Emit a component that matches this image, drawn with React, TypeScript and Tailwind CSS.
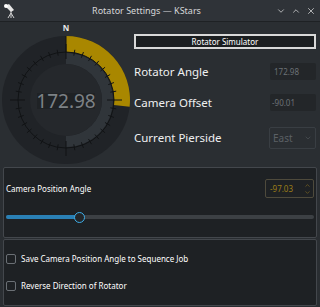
import { ChevronDown, ChevronUp, X } from 'lucide-react';

const CX = 66;
const CY = 78;

const ticks = Array.from({ length: 36 }, (_, i) => i * 10);

const Dial: React.FC = () => {
  return (
    <svg width="132" height="145" viewBox="0 0 132 145" className="shrink-0">
      <text x={CX} y="9" textAnchor="middle" fontSize="8" fontWeight="700" fill="#e8e8e8" fontFamily="Noto Sans, sans-serif">N</text>
      <circle cx={CX} cy={CY} r="64" fill="#202327" />
      <path d="M 66 14 A 64 64 0 0 1 129.65 84.69 L 113.74 83.02 A 48 48 0 0 0 66 30 Z" fill="#a98700" />
      <path d="M 66 31 A 47 47 0 0 1 66 125 L 66 114 A 36 36 0 0 0 66 42 Z" fill="#30353a" />
      <circle cx={CX} cy={CY} r="36" fill="#25282c" />
      <circle cx={CX} cy={CY} r="48" fill="none" stroke="#111315" strokeWidth="1" />
      <line x1={CX} y1="14" x2={CX} y2="30" stroke="#111315" strokeWidth="1" />
      {ticks.map((a) => {
        const rad = (a * Math.PI) / 180;
        const big = a % 90 === 0;
        const r1 = big ? 41 : 45;
        const r2 = big ? 56 : 51;
        return (
          <line
            key={a}
            x1={CX + r1 * Math.sin(rad)}
            y1={CY - r1 * Math.cos(rad)}
            x2={CX + r2 * Math.sin(rad)}
            y2={CY - r2 * Math.cos(rad)}
            stroke="#111315"
            strokeWidth="1"
          />
        );
      })}
      <rect x="37" y="71" width="58" height="16" fill="#1f2225" />
      <text x={CX} y="86" textAnchor="middle" fontSize="19" fill="#7d8185" fontFamily="Noto Sans, sans-serif">172.98</text>
    </svg>
  );
};

const TitleIcon: React.FC = () => (
  <svg width="14" height="16" viewBox="0 0 14 16">
    <path d="M2 3 L6 1 L11 7 L8 9 Z" fill="#e6e6e6" />
    <circle cx="3" cy="3" r="2" fill="#ffffff" />
    <path d="M8 8 L8 10 M8 10 L5 15 M8 10 L11 15 M8 10 L8 15" stroke="#d0d0d0" strokeWidth="1" />
  </svg>
);

const App: React.FC = () => {
  return (
    <div className="w-[320px] h-[307px] bg-[#2a2e32] flex flex-col overflow-hidden font-['Noto_Sans',sans-serif] text-[#eff0f1]">
      <div className="h-[22px] shrink-0 bg-[#2f3338] border-b border-[#1e2124] flex items-center px-[3px] relative">
        <TitleIcon />
        <div className="flex-1 text-center text-[9px] text-[#d6d7d8]">Rotator Settings — KStars</div>
        <div className="flex items-center gap-[5px] pr-[1px] text-[#c8c9ca]">
          <ChevronDown size={10} strokeWidth={2} />
          <ChevronUp size={10} strokeWidth={2} />
          <X size={10} strokeWidth={2} />
        </div>
      </div>

      <div className="flex h-[145px] shrink-0">
        <Dial />
        <div className="flex flex-col pl-[2px] pt-[12px] w-[184px]">
          <div className="w-[182px] h-[15px] border-2 border-[#d8d8d8] bg-[#1b1e20] flex items-center justify-center text-[8px] text-white leading-none">
            Rotator Simulator
          </div>
          <div className="flex items-center justify-between mt-[14px] h-[17px]">
            <span className="text-[11.5px]">Rotator Angle</span>
            <div className="w-[46px] h-[17px] bg-[#232629] rounded-[2px] text-[8px] text-[#6c7176] flex items-center pl-[4px]">172.98</div>
          </div>
          <div className="flex items-center justify-between mt-[14px] h-[17px]">
            <span className="text-[11.5px]">Camera Offset</span>
            <div className="w-[46px] h-[17px] bg-[#232629] rounded-[2px] text-[8px] text-[#6c7176] flex items-center pl-[2px]">-90.01</div>
          </div>
          <div className="flex items-center justify-between mt-[16px] h-[22px]">
            <span className="text-[11.5px]">Current Pierside</span>
            <div className="w-[47px] h-[22px] border border-[#393e43] rounded-[2px] text-[10px] text-[#5b6065] flex items-center justify-between pl-[3px] pr-[3px]">
              <span>East</span>
              <ChevronDown size={8} strokeWidth={1.5} />
            </div>
          </div>
        </div>
      </div>

      <div className="mx-[3px] mt-[0px] h-[71px] shrink-0 border border-[#43474c] rounded-[2px] bg-[#1e2124] flex flex-col px-[2px]">
        <div className="flex items-center justify-between mt-[11px] h-[19px]">
          <span className="text-[8px] text-white">Camera Position Angle</span>
          <div className="w-[49px] h-[19px] border border-[#4e4a3c] rounded-[2px] flex items-center justify-between pl-[4px] pr-[2px] text-[8px] text-[#9c7d18]">
            <span>-97.03</span>
            <div className="flex flex-col text-[#8a7020]">
              <ChevronUp size={7} strokeWidth={2} />
              <ChevronDown size={7} strokeWidth={2} />
            </div>
          </div>
        </div>
        <div className="relative mt-[14px] h-[10px] flex items-center">
          <div className="w-full h-[4px] rounded-full bg-[#3c4044] flex">
            <div className="w-[74px] h-full rounded-full bg-[#2a80b5]" />
          </div>
          <div className="absolute left-[68px] top-0 w-[11px] h-[11px] rounded-full border border-[#3daee9] bg-[#232629]" />
        </div>
      </div>

      <div className="mx-[3px] mt-[1px] h-[67px] shrink-0 border border-[#43474c] rounded-[2px] bg-[#1e2124] flex flex-col px-[2px] pt-[14px] gap-[17px]">
        <label className="flex items-center gap-[5px] text-[8px] text-white h-[10px]">
          <span className="w-[10px] h-[10px] rounded-[2px] border border-[#6b7075] bg-[#1e2124]" />
          Save Camera Position Angle to Sequence Job
        </label>
        <label className="flex items-center gap-[5px] text-[8px] text-white h-[10px]">
          <span className="w-[10px] h-[10px] rounded-[2px] border border-[#6b7075] bg-[#1e2124]" />
          Reverse Direction of Rotator
        </label>
      </div>
    </div>
  );
};

export default App;
